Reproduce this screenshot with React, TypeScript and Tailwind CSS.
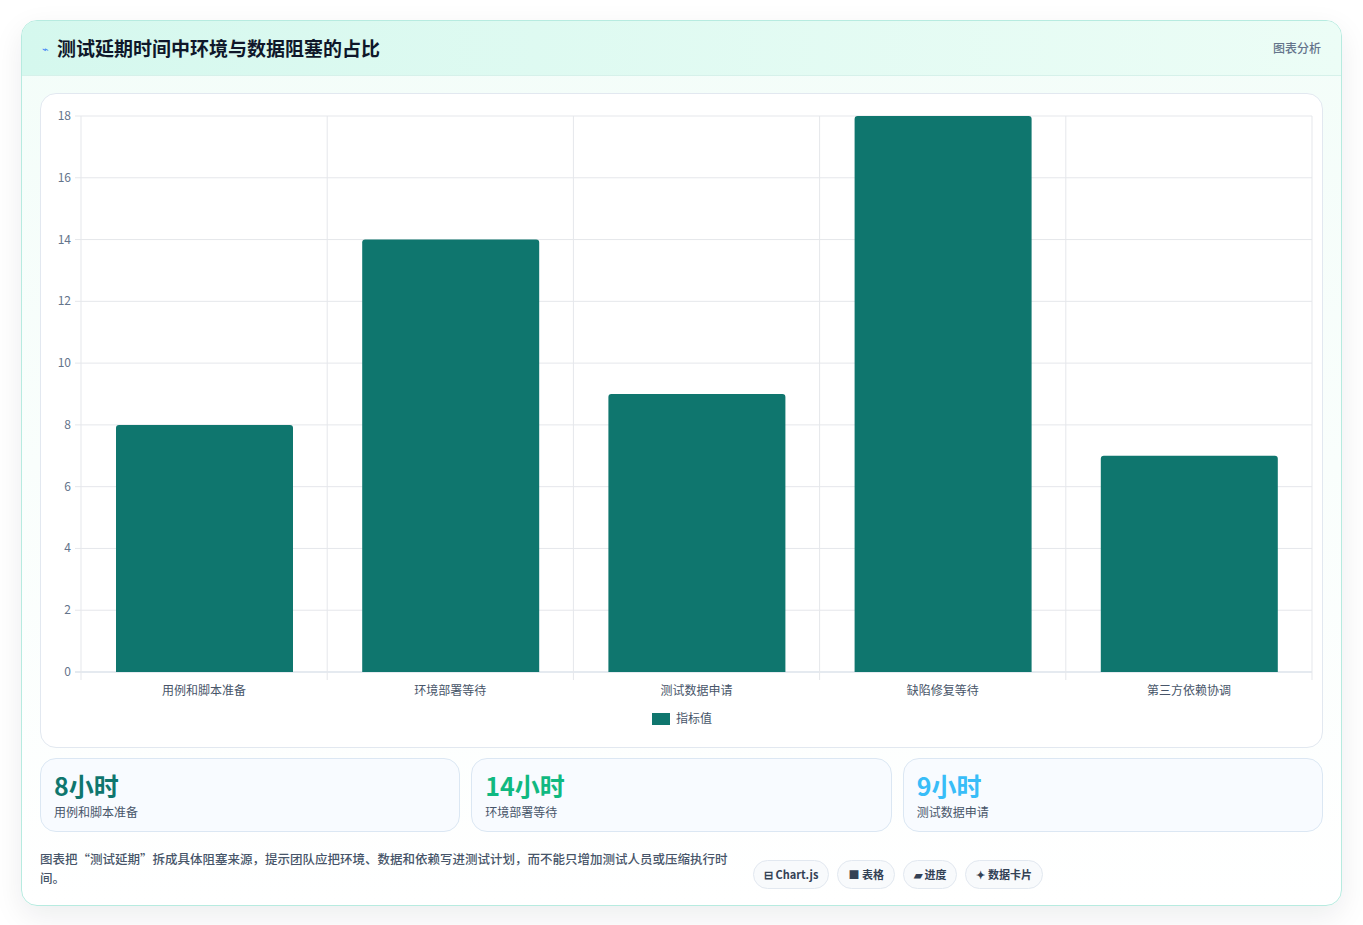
const font = { fontFamily: '"Noto Sans CJK SC", "Noto Sans", sans-serif' };

const data = [
  { label: "用例和脚本准备", value: 8 },
  { label: "环境部署等待", value: 14 },
  { label: "测试数据申请", value: 9 },
  { label: "缺陷修复等待", value: 18 },
  { label: "第三方依赖协调", value: 7 },
];

const stats = [
  { v: "8小时", l: "用例和脚本准备", c: "text-[#0f766e]" },
  { v: "14小时", l: "环境部署等待", c: "text-[#10b981]" },
  { v: "9小时", l: "测试数据申请", c: "text-[#38bdf8]" },
];

function Chart() {
  const W = 1283, H = 653;
  const x0 = 40, x1 = 1271, y0 = 578, y1 = 22;
  const step = (x1 - x0) / data.length;
  const unit = (y0 - y1) / 18;
  return (
    <svg width={W} height={H} viewBox={`0 0 ${W} ${H}`} className="block">
      {[0, 2, 4, 6, 8, 10, 12, 14, 16, 18].map((t) => {
        const y = y0 - t * unit;
        return (
          <g key={t}>
            <line x1={x0 - 6} x2={x1} y1={y} y2={y} stroke={t === 0 ? "#cbd5e1" : "#e5e7eb"} />
            <text x={x0 - 10} y={y + 4} textAnchor="end" fontSize="12" fill="#64748b" style={font}>{t}</text>
          </g>
        );
      })}
      {Array.from({ length: 6 }).map((_, i) => (
        <line key={i} x1={x0 + i * step} x2={x0 + i * step} y1={y1} y2={y0 + 8} stroke="#e5e7eb" />
      ))}
      {data.map((d, i) => {
        const bx = x0 + i * step + 35;
        const h = d.value * unit;
        return (
          <g key={d.label}>
            <path d={`M${bx} ${y0} V${y0 - h + 3} Q${bx} ${y0 - h} ${bx + 3} ${y0 - h} H${bx + 174} Q${bx + 177} ${y0 - h} ${bx + 177} ${y0 - h + 3} V${y0} Z`} fill="#0f766e" />
            <text x={x0 + i * step + step / 2} y={601} textAnchor="middle" fontSize="12" fill="#475569" style={font}>{d.label}</text>
          </g>
        );
      })}
      <rect x={611} y={619} width={18} height={12} fill="#0f766e" />
      <text x={635} y={629} fontSize="12" fill="#475569" style={font}>指标值</text>
    </svg>
  );
}

export default function App() {
  return (
    <div className="min-h-[925px] bg-white pt-5 px-[21px]" style={font}>
      <div className="w-[1321px] rounded-2xl border border-[#b7ebe0] bg-gradient-to-b from-[#f3fdf9] to-white shadow-[0_10px_30px_rgba(15,23,42,0.08)] overflow-hidden">
        <div className="h-[55px] flex items-center justify-between px-5 bg-gradient-to-r from-[#d5f8ee] to-[#ecfdf6] border-b border-[#d6f1ea]">
          <div className="flex items-center gap-2">
            <span className="text-[11px] text-[#3b82f6]">⌁</span>
            <h1 className="text-[19px] font-bold text-[#0f172a]">测试延期时间中环境与数据阻塞的占比</h1>
          </div>
          <span className="text-[12px] font-medium text-[#64748b]">图表分析</span>
        </div>
        <div className="px-[18px] pt-[17px] pb-4">
          <div className="rounded-2xl border border-[#e2e8f0] bg-white overflow-hidden">
            <Chart />
          </div>
          <div className="grid grid-cols-3 gap-[11px] mt-[10px]">
            {stats.map((s) => (
              <div key={s.l} className="h-[74px] rounded-2xl border border-[#dbe7f3] bg-[#f8fbff] px-[13px] pt-[9px]">
                <div className={`text-[25px] font-bold leading-[34px] ${s.c}`}>{s.v}</div>
                <div className="text-[12px] text-[#475569] mt-[1px]">{s.l}</div>
              </div>
            ))}
          </div>
          <div className="flex items-center mt-[16px]">
            <p className="w-[700px] text-[12.5px] leading-[19px] text-[#475569] font-medium">
              图表把“测试延期”拆成具体阻塞来源，提示团队应把环境、数据和依赖写进测试计划，而不能只增加测试人员或压缩执行时间。
            </p>
            <div className="flex gap-2 ml-[13px] mt-[12px]">
              {["⊟ Chart.js", "■ 表格", "▰ 进度", "✦ 数据卡片"].map((c) => (
                <span key={c} className="rounded-full border border-[#e2e8f0] bg-[#f8fafc] px-[10px] py-[5px] text-[11px] font-semibold text-[#334155]">{c}</span>
              ))}
            </div>
          </div>
        </div>
      </div>
    </div>
  );
}
